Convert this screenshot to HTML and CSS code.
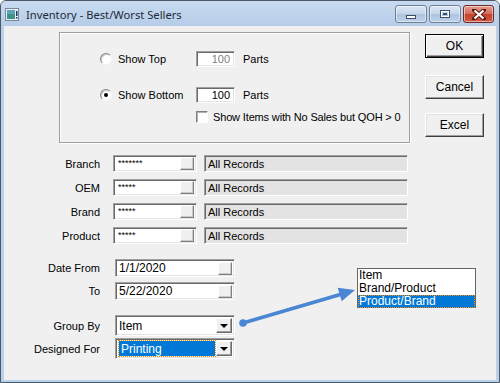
FILE: index.html
```html
<!DOCTYPE html>
<html lang="en">
<head>
  <meta charset="UTF-8" />
  <title>Inventory - Best/Worst Sellers</title>
  <link rel="stylesheet" href="styles.css">
</head>
<body>
  <div class="window">
    <div class="titlebar">
      <svg class="app-icon" width="15" height="14" viewBox="0 0 15 14">
        <rect x="0.5" y="0.5" width="13" height="12" fill="#e8eef4" stroke="#7a8796"/>
        <rect x="2" y="2" width="8" height="9" fill="#3f8f8a"/>
        <rect x="2" y="2" width="8" height="4" fill="#5aa6b8"/>
        <rect x="11" y="3" width="1.5" height="5" fill="#1a3a5a"/>
        <rect x="11" y="9" width="1.5" height="1.5" fill="#1a3a5a"/>
      </svg>
      <span class="title">Inventory - Best/Worst Sellers</span>
      <div class="caption-btns">
        <div class="cap-btn"><span class="glyph-min"></span></div>
        <div class="cap-btn"><span class="glyph-max"></span></div>
        <div class="cap-btn close">
          <svg width="14" height="11" viewBox="0 0 14 11">
            <path d="M2 1 L12 10 M12 1 L2 10" stroke="#5a1a14" stroke-width="4" stroke-linecap="square"/>
            <path d="M2.5 1.5 L11.5 9.5 M11.5 1.5 L2.5 9.5" stroke="#fff" stroke-width="2.2"/>
          </svg>
        </div>
      </div>
    </div>

    <div class="client">
      <div class="main">
        <div class="group">
          <div class="opt-row">
            <label class="opt"><span class="radio"></span>Show Top</label>
            <span class="field num disabled">100</span>
            <span class="unit">Parts</span>
          </div>
          <div class="opt-row second">
            <label class="opt"><span class="radio checked"></span>Show Bottom</label>
            <span class="field num">100</span>
            <span class="unit">Parts</span>
          </div>
          <div class="chk-row">
            <span class="checkbox"></span>
            <span>Show Items with No Sales but QOH &gt; 0</span>
          </div>
        </div>

        <div class="filters">
          <div class="row">
            <span class="label">Branch</span>
            <span class="field code"><span class="mask">*******</span><span class="pick"></span></span>
            <span class="field desc">All Records</span>
          </div>
          <div class="row">
            <span class="label">OEM</span>
            <span class="field code"><span class="mask">*****</span><span class="pick"></span></span>
            <span class="field desc">All Records</span>
          </div>
          <div class="row">
            <span class="label">Brand</span>
            <span class="field code"><span class="mask">*****</span><span class="pick"></span></span>
            <span class="field desc">All Records</span>
          </div>
          <div class="row">
            <span class="label">Product</span>
            <span class="field code"><span class="mask">*****</span><span class="pick"></span></span>
            <span class="field desc">All Records</span>
          </div>
        </div>

        <div class="dates">
          <div class="row">
            <span class="label">Date From</span>
            <span class="field date"><span class="val">1/1/2020</span><span class="pick"></span></span>
          </div>
          <div class="row">
            <span class="label">To</span>
            <span class="field date"><span class="val">5/22/2020</span><span class="pick"></span></span>
          </div>
        </div>

        <div class="combos">
          <div class="row">
            <span class="label">Group By</span>
            <span class="field combo"><span class="val">Item</span><span class="drop"></span></span>
          </div>
          <div class="row">
            <span class="label">Designed For</span>
            <span class="field combo"><span class="val selected">Printing</span><span class="drop"></span></span>
          </div>
        </div>
      </div>

      <div class="actions">
        <button class="btn default">OK</button>
        <button class="btn cancel">Cancel</button>
        <button class="btn excel">Excel</button>
      </div>
    </div>

    <svg class="annotation" width="500" height="383" viewBox="0 0 500 383">
      <line x1="243" y1="323" x2="342" y2="294" stroke="#4a86d3" stroke-width="3.5" stroke-linecap="round"/>
      <circle cx="243" cy="323" r="3.8" fill="#4a86d3"/>
      <polygon points="355,290 341.7,301.2 337.7,287.8" fill="#4a86d3"/>
    </svg>

    <div class="popup-list">
      <div class="item">Item</div>
      <div class="item">Brand/Product</div>
      <div class="item selected">Product/Brand</div>
    </div>
  </div>
</body>
</html>
```

FILE: styles.css
```css
* {
  margin: 0;
  padding: 0;
  box-sizing: border-box;
}

body {
  font-family: "Liberation Sans", Arial, sans-serif;
  font-size: 11px;
  color: #000;
  background: #fff;
}

.window {
  position: relative;
  width: 500px;
  height: 383px;
  border: 1px solid #4e5866;
  border-radius: 6px 6px 0 0;
  background: #b9d1ea;
  overflow: hidden;
}

/* title bar */
.titlebar {
  height: 25px;
  display: flex;
  align-items: flex-start;
  background: linear-gradient(#c8daef, #b6cde8);
}

.app-icon {
  margin: 7px 0 0 4px;
}

.title {
  margin: 6px 0 0 6px;
  font-family: "Noto Sans", "Open Sans", sans-serif;
  font-size: 11.2px;
  color: #1e2a3a;
  flex: 1;
}

.caption-btns {
  display: flex;
  gap: 2px;
  margin: 4px 5px 0 0;
}

.cap-btn {
  width: 32px;
  height: 18px;
  border: 1px solid #6d7f97;
  border-radius: 3px;
  background: linear-gradient(#dde8f5 0%, #c3d4ea 50%, #aec3de 51%, #bcd0e9 100%);
  display: flex;
  align-items: center;
  justify-content: center;
  box-shadow: inset 0 0 0 1px rgba(255, 255, 255, 0.5);
}

.cap-btn.close {
  width: 31px;
  border-color: #6e2a24;
  background: linear-gradient(#e49d8f 0%, #d46b5a 50%, #c2412c 51%, #cf5a45 100%);
}

.glyph-min {
  width: 10px;
  height: 4px;
  margin-top: 5px;
  background: #fff;
  border: 1px solid #3d4f66;
}

.glyph-max {
  width: 10px;
  height: 8px;
  border: 1px solid #3d4f66;
  box-shadow: inset 0 0 0 1px #fff;
  background: #3d4f66;
  background-clip: content-box;
  padding: 2px;
}

/* client area */
.client {
  margin: 0 3px;
  height: 354px;
  background: #f0f0f0;
  display: flex;
}

.main {
  width: 406px;
}

.group {
  margin: 6px 0 0 55px;
  width: 351px;
  height: 111px;
  border: 1px solid #a0a0a0;
  box-shadow: inset 1px 1px 0 #fff, 1px 1px 0 #fff;
  padding: 18px 0 0 40px;
}

.opt-row {
  display: flex;
  align-items: center;
  height: 16px;
}

.opt-row.second {
  margin-top: 20px;
}

.opt {
  width: 96px;
  display: flex;
  align-items: center;
  gap: 6px;
}

.radio {
  width: 12px;
  height: 12px;
  border-radius: 50%;
  border: 1px solid;
  border-color: #8a8a8a #f4f4f4 #f4f4f4 #8a8a8a;
  background: #fff;
  box-shadow: inset 1px 1px 0 #c8c8c8;
  display: flex;
  align-items: center;
  justify-content: center;
}

.radio.checked::after {
  content: "";
  width: 4px;
  height: 4px;
  border-radius: 50%;
  background: #000;
}

.field {
  display: flex;
  align-items: center;
  background: #fff;
  border: 1px solid;
  border-color: #a0a0a0 #fff #fff #a0a0a0;
  box-shadow: inset 1px 1px 0 #696969, inset -1px -1px 0 #e3e3e3;
}

.field.num {
  width: 39px;
  height: 16px;
  justify-content: flex-end;
  padding-right: 4px;
}

.field.num.disabled {
  color: #808080;
}

.unit {
  margin-left: 8px;
}

.chk-row {
  display: flex;
  align-items: center;
  height: 13px;
  margin-top: 7px;
  padding-left: 96px;
  gap: 5px;
  letter-spacing: -0.15px;
}

.checkbox {
  width: 12px;
  height: 12px;
  background: #fff;
  border: 1px solid;
  border-color: #808080 #fff #fff #808080;
  box-shadow: inset 1px 1px 0 #b0b0b0;
}

/* label + field rows */
.row {
  display: flex;
  align-items: center;
}

.label {
  width: 96px;
  text-align: right;
}

.filters {
  margin-top: 12px;
  display: flex;
  flex-direction: column;
  gap: 7px;
}

.filters .row {
  height: 17px;
}

.field.code {
  margin-left: 13px;
  width: 84px;
  height: 17px;
  padding: 2px 2px 2px 4px;
  justify-content: space-between;
}

.mask {
  font-size: 9px;
  line-height: 9px;
  align-self: flex-start;
  margin-top: 1px;
}

.pick {
  width: 14px;
  height: 13px;
  background: #f0f0f0;
  border: 1px solid;
  border-color: #fff #808080 #808080 #fff;
  box-shadow: inset -1px -1px 0 #c8c8c8;
}

.field.desc {
  margin-left: 7px;
  width: 204px;
  height: 17px;
  background: #e3e3e3;
  padding-left: 3px;
}

.dates {
  margin-top: 15px;
  display: flex;
  flex-direction: column;
  gap: 5px;
}

.dates .row,
.combos .row {
  height: 18px;
}

.field.date,
.field.combo {
  margin-left: 15px;
  width: 120px;
  height: 18px;
  padding: 2px 2px 2px 3px;
  justify-content: space-between;
  font-size: 12px;
}

.combos {
  margin-top: 15px;
  display: flex;
  flex-direction: column;
  gap: 2px;
}

.combos .row {
  height: 21px;
}

.field.combo {
  height: 21px;
}

.val.selected {
  flex: 1;
  align-self: stretch;
  margin-right: 1px;
  padding-left: 2px;
  background: #0078d7;
  color: #fff;
  outline: 1px dotted #ff8a00;
  display: flex;
  align-items: center;
}

.drop {
  width: 16px;
  height: 15px;
  background: #f0f0f0;
  border: 1px solid;
  border-color: #fff #696969 #696969 #fff;
  box-shadow: inset -1px -1px 0 #a0a0a0;
  display: flex;
  align-items: center;
  justify-content: center;
}

.drop::after {
  content: "";
  border-left: 4px solid transparent;
  border-right: 4px solid transparent;
  border-top: 4px solid #000;
}

/* command buttons */
.actions {
  margin-left: 15px;
  padding-top: 8px;
  display: flex;
  flex-direction: column;
}

.btn {
  width: 59px;
  height: 24px;
  font-family: inherit;
  font-size: 12px;
  background: #f0f0f0;
  border: 1px solid;
  border-color: #fff #404040 #404040 #fff;
  box-shadow: inset -1px -1px 0 #a0a0a0, inset 1px 1px 0 #e3e3e3;
}

.btn.default {
  border-color: #000;
  box-shadow: inset 1px 1px 0 #fff, inset -1px -1px 0 #404040, inset -2px -2px 0 #a0a0a0;
}

.btn.cancel {
  margin-top: 17px;
}

.btn.excel {
  margin-top: 14px;
}

/* annotation overlay */
.annotation {
  position: absolute;
  left: -1px;
  top: -1px;
  pointer-events: none;
}

.popup-list {
  position: absolute;
  left: 356px;
  top: 267px;
  width: 119px;
  height: 40px;
  background: #fff;
  border: 1px solid #646464;
  font-size: 12px;
}

.popup-list .item {
  height: 13px;
  line-height: 13px;
  padding-left: 1px;
}

.popup-list .item.selected {
  background: #0078d7;
  color: #fff;
  outline: 1px dotted #ff8a00;
  outline-offset: -1px;
}
```
